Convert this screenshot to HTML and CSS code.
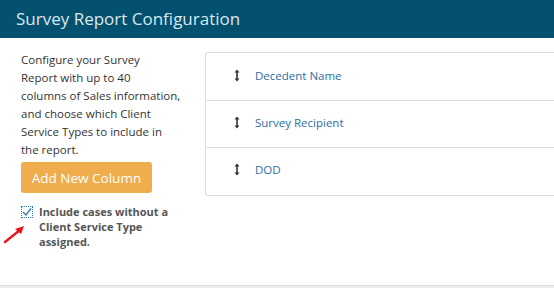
FILE: index.html
```html
<!DOCTYPE html>
<html lang="en">
<head>
    <meta charset="UTF-8">
    <meta name="viewport" content="width=device-width, initial-scale=1.0">
    <title>Survey Report Configuration</title>
    <link rel="stylesheet" href="styles.css">
</head>
<body>
    <div class="header">Survey Report Configuration</div>
    <div class="main">
        <div class="sidebar">
            <p class="intro">Configure your Survey<br>Report with up to 40<br>columns of Sales information,<br>and choose which Client<br>Service Types to include in<br>the report.</p>
            <button class="add-btn">Add New Column</button>
            <label class="include">
                <span class="check">
                    <svg width="10" height="10" viewBox="0 0 10 10"><path d="M1 5 L4 8 L9 1.5" fill="none" stroke="#2b78c5" stroke-width="1.3"/></svg>
                </span>
                <span>Include cases without a Client Service Type assigned.</span>
            </label>
            <svg class="pointer" width="24" height="20" viewBox="0 0 24 20">
                <path d="M2 18 L17 6" stroke="#e8141a" stroke-width="2.4" stroke-linecap="round"/>
                <path d="M21 2 L12 5 L18 10 Z" fill="#e8141a"/>
            </svg>
        </div>
        <div class="columns">
            <div class="col-row">
                <svg class="grip" width="6" height="13" viewBox="0 0 6 13"><path d="M3 2 V11" stroke="#333" stroke-width="1.6"/><path d="M0.5 3.5 L3 0.5 L5.5 3.5 Z M0.5 9.5 L3 12.5 L5.5 9.5 Z" fill="#333"/></svg>
                <span>Decedent Name</span>
            </div>
            <div class="col-row">
                <svg class="grip" width="6" height="13" viewBox="0 0 6 13"><path d="M3 2 V11" stroke="#333" stroke-width="1.6"/><path d="M0.5 3.5 L3 0.5 L5.5 3.5 Z M0.5 9.5 L3 12.5 L5.5 9.5 Z" fill="#333"/></svg>
                <span>Survey Recipient</span>
            </div>
            <div class="col-row">
                <svg class="grip" width="6" height="13" viewBox="0 0 6 13"><path d="M3 2 V11" stroke="#333" stroke-width="1.6"/><path d="M0.5 3.5 L3 0.5 L5.5 3.5 Z M0.5 9.5 L3 12.5 L5.5 9.5 Z" fill="#333"/></svg>
                <span>DOD</span>
            </div>
        </div>
    </div>
    <div class="footer"></div>
</body>
</html>
```

FILE: styles.css
```css
body {
    margin: 0;
    font-family: "Open Sans", Arial, sans-serif;
    background: #fff;
    overflow: hidden;
}
.header {
    height: 38px;
    line-height: 38px;
    padding-left: 16px;
    background: #03506f;
    color: #d8e8f0;
    font-size: 17px;
}
.main {
    display: flex;
    height: 247px;
    box-sizing: border-box;
    padding: 13px 0 0 21px;
}
.sidebar {
    position: relative;
    width: 160px;
    flex-shrink: 0;
}
.intro {
    margin: 0;
    white-space: nowrap;
    font-size: 11.5px;
    line-height: 18px;
    color: #333;
}
.add-btn {
    display: block;
    margin-top: 3px;
    width: 131px;
    height: 31px;
    border: none;
    border-radius: 3px;
    background: #f0ad4e;
    color: #fff;
    font-family: inherit;
    font-size: 13.5px;
    padding: 0;
}
.include {
    display: flex;
    gap: 6px;
    margin-top: 12px;
    font-size: 11px;
    line-height: 15px;
    font-weight: bold;
    color: #555;
}
.include span:last-child {
    margin-top: -1px;
}
.check {
    flex-shrink: 0;
    width: 10px;
    height: 10px;
    margin-top: 1px;
    border: 1px dotted #2b78c5;
    display: flex;
    align-items: center;
    justify-content: center;
}
.pointer {
    position: absolute;
    left: -18px;
    top: 173px;
}
.columns {
    margin-left: 24px;
    margin-top: 1px;
    width: 360px;
    height: 142px;
    border: 1px solid #ddd;
    border-right: none;
    border-radius: 3px 0 0 3px;
}
.col-row {
    display: flex;
    align-items: center;
    height: 47px;
    box-sizing: border-box;
    padding: 0 0 3px 28px;
    border-top: 1px solid #ddd;
    font-size: 11.5px;
    color: #2a6fa5;
}
.col-row:first-child {
    border-top: none;
}
.grip {
    margin-right: 15px;
}
.footer {
    height: 3px;
    border-top: 1px solid #ddd;
    background: #eee;
}
```
